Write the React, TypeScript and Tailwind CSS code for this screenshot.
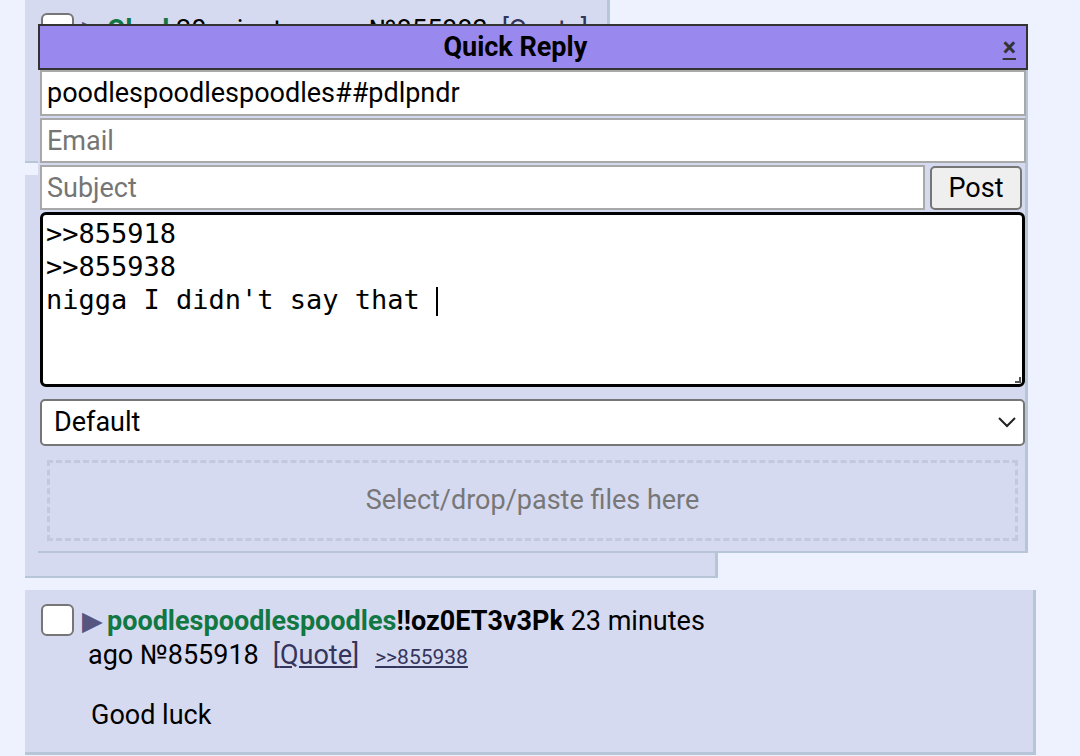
import React from 'react';

const font = { fontFamily: 'Roboto, "Noto Sans", sans-serif' };

function Checkbox() {
  return (
    <span className="inline-block h-[32px] w-[33px] shrink-0 rounded-[6px] border-2 border-[#767676] bg-white" />
  );
}

function PostHeader({
  name,
  trip,
  time,
  no,
  backlink,
}: {
  name: string;
  trip?: string;
  time: string;
  no: string;
  backlink?: string;
}) {
  return (
    <div className="flex items-start text-[27px] leading-[34px] text-black">
      <Checkbox />
      <div className="ml-[8px] -indent-[6px] pl-[6px]">
        <span className="mr-[4px] text-[#55557f]">▶</span>
        <span className="font-bold text-[#117743]">{name}</span>
        {trip ? <span className="font-bold">{trip}</span> : null} {time} ago{' '}
        №{no}
        <span className="ml-[14px] text-[#34345c]">
          [<span className="underline">Quote</span>]
        </span>
        {backlink ? (
          <span className="ml-[16px] text-[21px] text-[#34345c] underline">
            &gt;&gt;{backlink}
          </span>
        ) : null}
      </div>
    </div>
  );
}

function QuickReply() {
  return (
    <div className="absolute left-[38px] top-[24px] w-[990px]">
      <div className="flex h-[46px] items-center border-2 border-[#333] bg-[#9988ee]">
        <div className="flex-1 pr-[12px] text-center text-[27px] font-bold text-black">
          Quick Reply
        </div>
        <span className="mr-[10px] text-[25px] font-bold leading-none text-[#333] underline">
          ×
        </span>
      </div>
      <div className="flex flex-col border-r-[3px] border-b-[2px] border-[#b7c5d9] bg-[#d6daf0] pb-[10px] pl-[2px]">
        <input
          className="h-[46px] w-[986px] border-2 border-[#a9a9a9] bg-white px-[5px] text-[27px] text-black outline-none"
          defaultValue="poodlespoodlespoodles##pdlpndr"
        />
        <input
          className="mt-[2px] h-[45px] w-[986px] border-2 border-[#a9a9a9] bg-white px-[5px] text-[27px] text-black outline-none placeholder:text-[#757575]"
          placeholder="Email"
        />
        <div className="mt-[2px] flex items-center">
          <input
            className="h-[45px] w-[885px] border-2 border-[#a9a9a9] bg-white px-[5px] text-[27px] text-black outline-none placeholder:text-[#757575]"
            placeholder="Subject"
          />
          <button
            type="button"
            className="ml-[5px] h-[44px] w-[92px] rounded-[5px] border-2 border-[#767676] bg-[#efefef] text-[27px] text-black"
          >
            Post
          </button>
        </div>
        <div
          className="relative mt-[2px] h-[175px] w-[985px] rounded-[6px] border-[3px] border-black bg-white px-[3px] pt-[2px] text-[27px] leading-[33px] text-black whitespace-pre"
          style={{ fontFamily: '"DejaVu Sans Mono", monospace' }}
        >
          {'>>855918\n>>855938\nnigga I didn\'t say that '}
          <span className="relative inline-block w-[2px]">
            <span className="absolute bottom-[-7px] left-0 h-[29px] w-[2px] bg-black" />
          </span>
          <span className="absolute bottom-[1px] right-[1px] h-[6px] w-[6px] border-r-2 border-b-2 border-[#555]" />
        </div>
        <div className="relative mt-[12px] w-[985px]">
          <select className="h-[47px] w-full appearance-none rounded-[5px] border-2 border-[#767676] bg-white px-[12px] text-[27px] text-black outline-none">
            <option>Default</option>
          </select>
          <svg
            className="pointer-events-none absolute right-[9px] top-[17px]"
            width="18"
            height="12"
            viewBox="0 0 18 12"
            fill="none"
            stroke="#222"
            strokeWidth="2"
          >
            <path d="M1 2l8 8 8-8" />
          </svg>
        </div>
        <div className="ml-[7px] mt-[14px] flex h-[81px] w-[971px] items-center justify-center border-[3px] border-dashed border-[#c5c8dc] text-[27px] text-[#777]">
          Select/drop/paste files here
        </div>
      </div>
    </div>
  );
}

export default function App() {
  return (
    <div className="min-h-screen bg-[#eef2ff] pb-[20px]" style={font}>
      <div className="relative">
        <div className="ml-[25px] h-[163px] w-[585px] overflow-hidden border-r-[3px] border-b-[2px] border-[#b7c5d9] bg-[#d6daf0] pl-[16px] pt-[13px]">
          <PostHeader name="Obyd" time="20 minutes" no="855883" />
        </div>
        <div className="ml-[25px] mt-[12px] h-[403px] w-[693px] border-r-[3px] border-b-[2px] border-[#b7c5d9] bg-[#d6daf0]" />
        <QuickReply />
      </div>
      <div className="ml-[25px] mt-[12px] w-[1011px] border-r-[3px] border-b-[3px] border-[#b7c5d9] bg-[#d6daf0] pb-[20px] pl-[16px] pt-[14px]">
        <div className="w-[700px]">
          <PostHeader
            name="poodlespoodlespoodles"
            trip="!!oz0ET3v3Pk"
            time="23 minutes"
            no="855918"
            backlink="855938"
          />
        </div>
        <div className="ml-[50px] mt-[24px] text-[27px] leading-[34px] text-black">
          Good luck
        </div>
      </div>
    </div>
  );
}
